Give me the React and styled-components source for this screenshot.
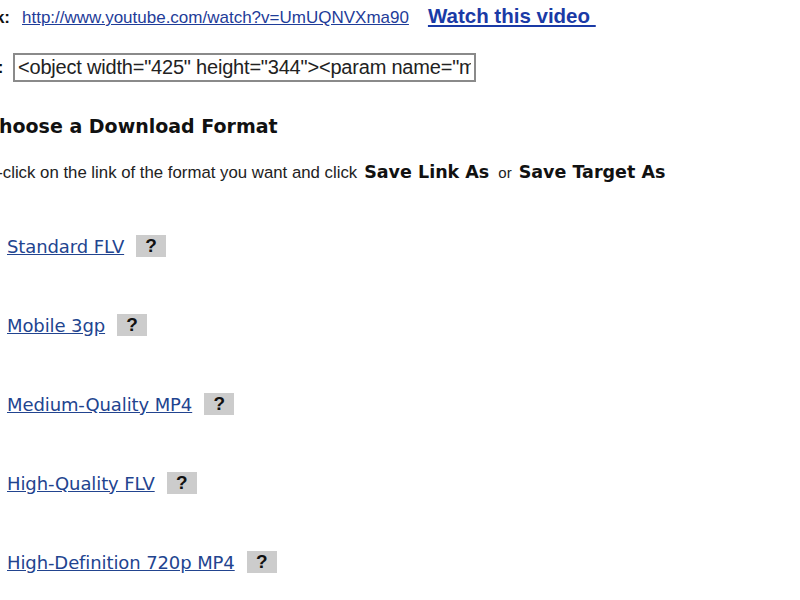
import React from 'react';
import styled, { createGlobalStyle } from 'styled-components';

const GlobalStyle = createGlobalStyle`
  html, body {
    margin: 0;
    padding: 0;
    background: #fff;
  }
  body {
    width: 800px;
    height: 600px;
    overflow: hidden;
    font-family: "Liberation Sans", Arial, sans-serif;
    color: #111;
  }
`;

const formats = [
  'Standard FLV',
  'Mobile 3gp',
  'Medium-Quality MP4',
  'High-Quality FLV',
  'High-Definition 720p MP4',
];

const App = () => {
  return (
    <Page>
      <GlobalStyle />
      <InfoRow>
        <Label>Link:</Label>
        <UrlLink href="#">http://www.youtube.com/watch?v=UmUQNVXma90</UrlLink>
        <WatchLink href="#">Watch this video&nbsp;</WatchLink>
      </InfoRow>
      <EmbedRow>
        <Label>Embed:</Label>
        <EmbedInput
          readOnly
          value={'<object width="425" height="344"><param name="movie" value="http://www.youtube.com/v/UmUQNVXma90"></param>'}
        />
      </EmbedRow>
      <Heading>Choose a Download Format</Heading>
      <Instructions>
        Right-click on the link of the format you want and click
        <Strong>Save Link As</Strong>
        <Or>or</Or>
        <Strong>Save Target As</Strong>
      </Instructions>
      <FormatList>
        {formats.map((f) => (
          <FormatItem key={f}>
            <FormatLink href="#">{f}</FormatLink>
            <Help>?</Help>
          </FormatItem>
        ))}
      </FormatList>
    </Page>
  );
};
export default App;

const Page = styled.div`
  display: flex;
  flex-direction: column;
  padding-top: 4px;
`;

const InfoRow = styled.div`
  display: flex;
  align-items: baseline;
  margin-left: -50px;
  height: 22px;
`;

const Label = styled.span`
  width: 60px;
  text-align: right;
  font-weight: bold;
  font-size: 17px;
  color: #111;
`;

const UrlLink = styled.a`
  margin-left: 12px;
  font-size: 17px;
  color: #1f3d99;
  text-decoration: underline;
`;

const WatchLink = styled.a`
  margin-left: 19px;
  font-size: 20.5px;
  font-weight: bold;
  color: #1a3aa6;
  text-decoration: underline;
`;

const EmbedRow = styled.div`
  display: flex;
  align-items: center;
  margin-left: -59px;
  margin-top: 27px;
`;

const EmbedInput = styled.input`
  margin-left: 12px;
  width: 463px;
  height: 29px;
  box-sizing: border-box;
  border: 2px solid #8a8a8a;
  padding: 0 3px;
  font-family: "Liberation Sans", Arial, sans-serif;
  font-size: 20px;
  letter-spacing: -0.2px;
  color: #222;
  background: #fff;
  outline: none;
`;

const Heading = styled.h2`
  margin: 33px 0 0 -15px;
  font-family: "DejaVu Sans", Verdana, sans-serif;
  font-size: 19px;
  font-weight: bold;
  color: #111;
`;

const Instructions = styled.div`
  margin: 25px 0 0 -42px;
  display: flex;
  align-items: baseline;
  font-size: 16.8px;
  color: #222;
  white-space: nowrap;
`;

const Strong = styled.span`
  margin-left: 7px;
  font-family: "DejaVu Sans", Verdana, sans-serif;
  font-size: 17.5px;
  font-weight: bold;
  color: #111;
`;

const Or = styled.span`
  margin-left: 9px;
  font-size: 15px;
`;

const FormatList = styled.div`
  display: flex;
  flex-direction: column;
  gap: 57px;
  margin-top: 52px;
  margin-left: 7px;
`;

const FormatItem = styled.div`
  display: flex;
  align-items: center;
  height: 22px;
`;

const FormatLink = styled.a`
  font-family: "DejaVu Sans", Verdana, sans-serif;
  font-size: 18px;
  letter-spacing: -0.1px;
  color: #22448f;
  text-decoration: underline;
`;

const Help = styled.span`
  margin-left: 12px;
  width: 30px;
  height: 22px;
  display: flex;
  align-items: center;
  justify-content: center;
  background: #cccccc;
  font-size: 19px;
  font-weight: bold;
  color: #111;
`;
